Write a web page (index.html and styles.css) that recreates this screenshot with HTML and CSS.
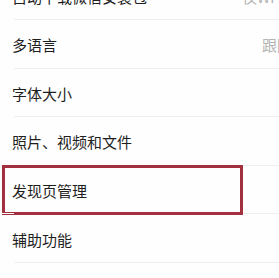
FILE: index.html
```html
<!DOCTYPE html>
<html lang="zh-CN">
<head>
<meta charset="utf-8">
<link rel="stylesheet" href="styles.css">
</head>
<body>
<div class="list">
  <div class="row"><span class="label">自动下载微信安装包</span><span class="value">仅Wi-Fi网络</span></div>
  <div class="row"><span class="label">多语言</span><span class="value">跟随系统</span></div>
  <div class="row"><span class="label">字体大小</span></div>
  <div class="row"><span class="label">照片、视频和文件</span></div>
  <div class="row"><span class="label">发现页管理</span><span class="highlight"></span></div>
  <div class="row"><span class="label">辅助功能</span></div>
</div>
</body>
</html>
```
FILE: styles.css
```css
html, body {
  margin: 0;
  padding: 0;
  background: #fefefe;
  overflow: hidden;
}
body {
  width: 279px;
  height: 278px;
  font-family: "Noto Sans CJK SC", "Noto Sans", sans-serif;
}
.list {
  width: 350px;
  margin-top: -28.6px;
  display: flex;
  flex-direction: column;
}
.row {
  position: relative;
  height: 48.6px;
  display: flex;
  align-items: center;
  padding: 2px 28px 0 12px;
  box-sizing: border-box;
  border-bottom: 1px solid #efefef;
}
.row::after {
  content: "";
  position: absolute;
  left: 0;
  bottom: -1px;
  width: 14px;
  height: 1px;
  background: #fefefe;
}
.label {
  flex: 1;
  font-size: 15px;
  line-height: 1;
  color: #1e1e1e;
}
.value {
  font-size: 15px;
  line-height: 1;
  color: #b4b4b4;
}
.highlight {
  position: absolute;
  left: 2px;
  top: -1px;
  width: 241px;
  height: 50px;
  border: 3px solid #a3303f;
  box-sizing: border-box;
}
```
